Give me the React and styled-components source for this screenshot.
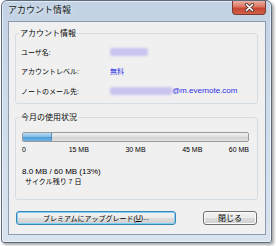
import React from "react";
import styled, { createGlobalStyle } from "styled-components";

const Global = createGlobalStyle`
  html, body { margin: 0; padding: 0; background: #ffffff; }
  body { font-family: "Liberation Sans", "Noto Sans CJK JP", sans-serif; }
  * { box-sizing: border-box; }
`;

const Page = styled.div`
  padding: 0 0 0 1px;
  width: 276px;
  height: 246px;
`;

const Window = styled.div`
  width: 271px;
  height: 243px;
  display: flex;
  flex-direction: column;
  border: 1px solid #5d6b7c;
  border-radius: 6px 6px 3px 3px;
  padding: 0 5px 7px 6px;
  background: linear-gradient(180deg, #c2d2e4 0%, #cddbea 40%, #d8e3ef 100%);
  box-shadow: inset 0 0 0 1px rgba(255, 255, 255, 0.55), 2px 2px 3px rgba(0, 0, 0, 0.35);
`;

const TitleBar = styled.div`
  height: 20px;
  display: flex;
  align-items: flex-start;
`;

const Title = styled.div`
  padding-top: 4px;
  font-size: 9px;
  line-height: 11px;
  color: #111820;
  text-shadow: 0 0 4px rgba(255, 255, 255, 0.9);
`;

const CloseBtn = styled.div`
  margin-left: auto;
  width: 34px;
  height: 14px;
  display: flex;
  align-items: center;
  justify-content: center;
  border: 1px solid #7a3a2f;
  border-top: none;
  border-radius: 0 0 4px 4px;
  background: linear-gradient(180deg, #eab0a2 0%, #dc7460 45%, #c84631 55%, #d0604a 100%);
`;

const Client = styled.div`
  flex: 1;
  display: flex;
  flex-direction: column;
  border: 1px solid #8b9bb0;
  background: #f0f0f0;
  padding: 0 7px 0 6px;
`;

const Group = styled.fieldset`
  margin: ${(p) => p.$top}px 0 0 0;
  min-width: 0;
  border: 1px solid #d4dde4;
  border-radius: 3px;
  padding: ${(p) => p.$pad};
`;

const Legend = styled.legend`
  margin-left: -2px;
  padding: 0 1px;
  font-size: 8px;
  line-height: 11px;
  color: #0a0a0a;
`;

const Row = styled.div`
  height: 19.5px;
  display: grid;
  grid-template-columns: 89px 1fr;
  align-items: center;
`;

const Label = styled.div`
  font-size: 7px;
  color: #000000;
`;

const Value = styled.div`
  display: flex;
  align-items: center;
  font-size: ${(p) => p.$size || 8}px;
  color: #2f2fe6;
`;

const Blur = styled.span`
  display: inline-block;
  width: ${(p) => p.$w}px;
  height: 8px;
  background: #c9c5f0;
  border-radius: 2px;
  filter: blur(1px);
`;

const Bar = styled.div`
  height: 10px;
  border: 1px solid #9a9a9a;
  border-radius: 2px;
  background: linear-gradient(180deg, #f2f2f2 0%, #dedede 50%, #d2d2d2 51%, #e2e2e2 100%);
  overflow: hidden;
`;

const Fill = styled.div`
  height: 100%;
  background: linear-gradient(180deg, #b8dcf4 0%, #7dbbe6 50%, #4f9bd6 51%, #6eb2e3 100%);
  border-right: 1px solid #5a8fb8;
`;

const Scale = styled.div`
  margin-top: 3px;
  display: grid;
  grid-template-columns: repeat(8, 1fr);
  font-size: 7px;
  line-height: 9px;
  color: #000000;
`;

const Tick = styled.div`
  grid-column: ${(p) => p.$col};
  text-align: ${(p) => p.$align};
  white-space: nowrap;
`;

const Usage = styled.div`
  margin-top: ${(p) => p.$top || 0}px;
  padding-left: ${(p) => p.$indent || 0}px;
  font-size: ${(p) => p.$size}px;
  line-height: 10px;
  color: #000000;
`;

const Buttons = styled.div`
  margin-top: 11px;
  display: flex;
  justify-content: space-between;
  padding: 0 1px 0 1px;
`;

const Button = styled.div`
  width: ${(p) => p.$w}px;
  height: 14px;
  display: flex;
  align-items: center;
  justify-content: center;
  font-size: ${(p) => p.$size || 7}px;
  color: #000000;
  border: 1px solid ${(p) => (p.$focus ? "#3b86b8" : "#707070")};
  border-radius: 3px;
  background: linear-gradient(180deg, #f2f2f2 0%, #ebebeb 50%, #dddddd 51%, #cfcfcf 100%);
  box-shadow: ${(p) => (p.$focus ? "inset 0 0 0 1px #7fd0f2" : "inset 0 0 0 1px #fbfbfb")};
`;

const Under = styled.span`
  text-decoration: underline;
`;

export default function App() {
  const percent = 13;
  return (
    <Page>
      <Global />
      <Window>
        <TitleBar>
          <Title>アカウント情報</Title>
          <CloseBtn>
            <svg width="11" height="9" viewBox="0 0 11 9">
              <path d="M2.5 1.5 L8.5 7.5 M8.5 1.5 L2.5 7.5" stroke="#5a3a34" strokeWidth="3.2" strokeLinecap="round" />
              <path d="M2.5 1.5 L8.5 7.5 M8.5 1.5 L2.5 7.5" stroke="#ffffff" strokeWidth="1.6" strokeLinecap="round" />
            </svg>
          </CloseBtn>
        </TitleBar>
        <Client>
          <Group $top={6} $pad="3px 5px 2px 5px">
            <Legend>アカウント情報</Legend>
            <Row>
              <Label>ユーザ名:</Label>
              <Value>
                <Blur $w={38} />
              </Value>
            </Row>
            <Row>
              <Label>アカウントレベル:</Label>
              <Value $size={7}>無料</Value>
            </Row>
            <Row>
              <Label>ノートのメール先:</Label>
              <Value>
                <Blur $w={62} />
                @m.evernote.com
              </Value>
            </Row>
          </Group>
          <Group $top={8} $pad="9px 8px 12px 6px">
            <Legend>今月の使用状況</Legend>
            <Bar>
              <Fill style={{ width: `${percent}%` }} />
            </Bar>
            <Scale>
              <Tick $col="1 / 2" $align="left">0</Tick>
              <Tick $col="2 / 4" $align="center">15 MB</Tick>
              <Tick $col="4 / 6" $align="center">30 MB</Tick>
              <Tick $col="6 / 8" $align="center">45 MB</Tick>
              <Tick $col="8 / 9" $align="right">60 MB</Tick>
            </Scale>
            <Usage $top={13} $size={8}>8.0 MB / 60 MB (13%)</Usage>
            <Usage $size={7} $indent={3}>サイクル残り 7 日</Usage>
          </Group>
          <Buttons>
            <Button $w={160} $focus>
              プレミアムにアップグレード(<Under>U</Under>)...
            </Button>
            <Button $w={54} $size={8}>閉じる</Button>
          </Buttons>
        </Client>
      </Window>
    </Page>
  );
}
